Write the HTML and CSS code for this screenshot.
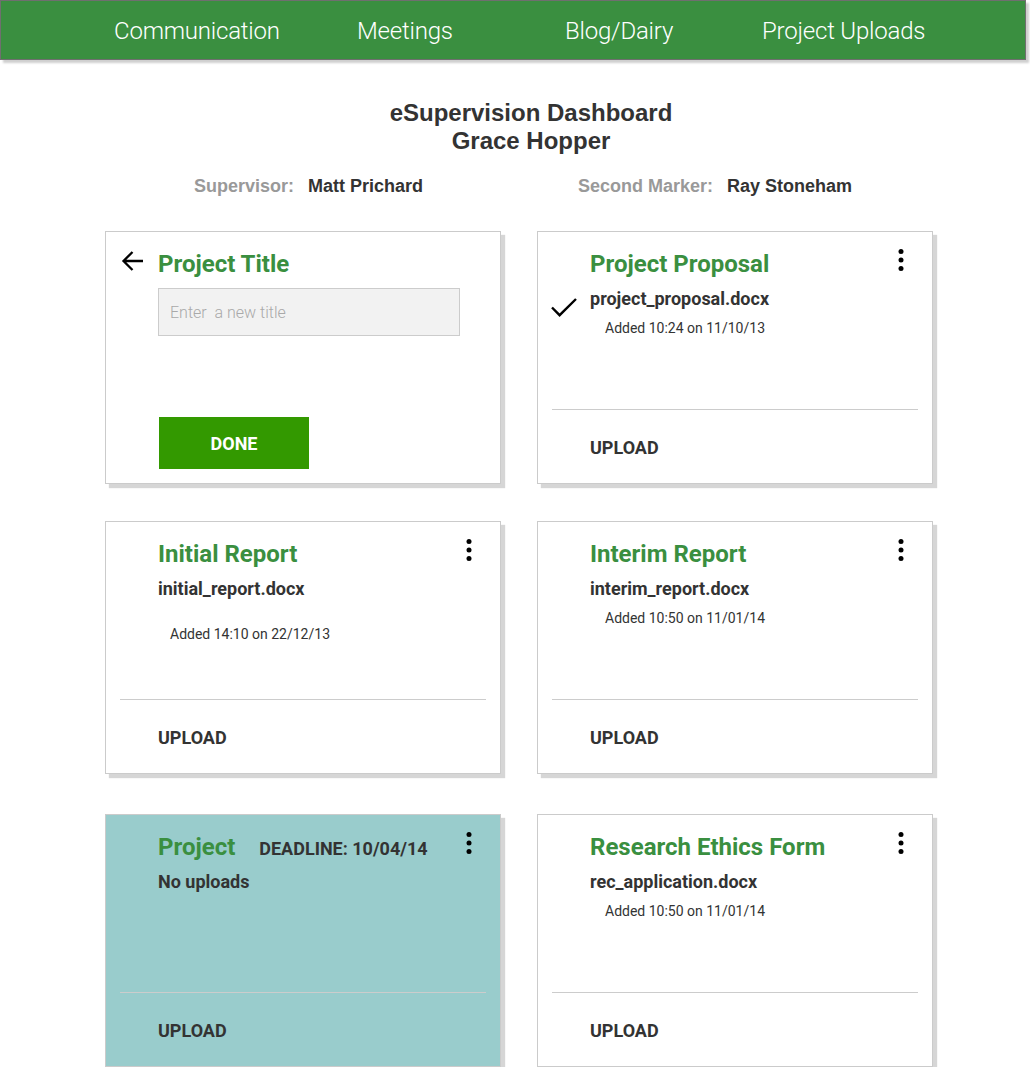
FILE: index.html
```html
<!DOCTYPE html>
<html lang="en">
<head>
<meta charset="utf-8">
<title>eSupervision Dashboard</title>
<link rel="stylesheet" href="styles.css">
</head>
<body>
<header class="topbar">
  <nav class="nav">
    <a class="nav-link">Communication</a>
    <a class="nav-link">Meetings</a>
    <a class="nav-link">Blog/Dairy</a>
    <a class="nav-link">Project Uploads</a>
  </nav>
</header>

<main class="page">
  <h1 class="page-title">eSupervision Dashboard<br>Grace Hopper</h1>

  <div class="people">
    <div class="person"><span class="person-label">Supervisor:</span><span class="person-name">Matt Prichard</span></div>
    <div class="person"><span class="person-label">Second Marker:</span><span class="person-name">Ray Stoneham</span></div>
  </div>

  <section class="cards">
    <!-- Project title editor -->
    <div class="card">
      <div class="card-body">
        <div class="card-head head-back">
          <svg class="back-icon" width="23" height="22" viewBox="0 0 23 22" aria-hidden="true">
            <path d="M22 11H2.5M11.5 2 2.5 11l9 9" fill="none" stroke="#000" stroke-width="2.3" stroke-linecap="butt" stroke-linejoin="miter"/>
          </svg>
          <h2 class="card-title">Project Title</h2>
        </div>
        <input class="title-input" type="text" placeholder="Enter  a new title">
        <button class="done-btn" type="button">DONE</button>
      </div>
    </div>

    <!-- Project Proposal -->
    <div class="card">
      <div class="card-body">
        <div class="card-head">
          <h2 class="card-title">Project Proposal</h2>
          <svg class="kebab" width="6" height="22" viewBox="0 0 6 22" aria-hidden="true"><circle cx="3" cy="2.6" r="2.5"/><circle cx="3" cy="11" r="2.5"/><circle cx="3" cy="19.4" r="2.5"/></svg>
        </div>
        <div class="file-row">
          <svg class="check-icon" width="26" height="19" viewBox="0 0 26 19" aria-hidden="true"><path d="M1 9.5 8.6 17.2 25 1" fill="none" stroke="#000" stroke-width="2.4"/></svg>
          <p class="file-name">project_proposal.docx</p>
        </div>
        <p class="added">Added 10:24 on 11/10/13</p>
      </div>
      <div class="card-foot">UPLOAD</div>
    </div>

    <!-- Initial Report -->
    <div class="card">
      <div class="card-body">
        <div class="card-head">
          <h2 class="card-title">Initial Report</h2>
          <svg class="kebab" width="6" height="22" viewBox="0 0 6 22" aria-hidden="true"><circle cx="3" cy="2.6" r="2.5"/><circle cx="3" cy="11" r="2.5"/><circle cx="3" cy="19.4" r="2.5"/></svg>
        </div>
        <p class="file-name">initial_report.docx</p>
        <p class="added added-low">Added 14:10 on 22/12/13</p>
      </div>
      <div class="card-foot">UPLOAD</div>
    </div>

    <!-- Interim Report -->
    <div class="card">
      <div class="card-body">
        <div class="card-head">
          <h2 class="card-title">Interim Report</h2>
          <svg class="kebab" width="6" height="22" viewBox="0 0 6 22" aria-hidden="true"><circle cx="3" cy="2.6" r="2.5"/><circle cx="3" cy="11" r="2.5"/><circle cx="3" cy="19.4" r="2.5"/></svg>
        </div>
        <p class="file-name">interim_report.docx</p>
        <p class="added">Added 10:50 on 11/01/14</p>
      </div>
      <div class="card-foot">UPLOAD</div>
    </div>

    <!-- Project (deadline) -->
    <div class="card card-due">
      <div class="card-body">
        <div class="card-head">
          <div class="title-group">
            <h2 class="card-title">Project</h2>
            <span class="deadline">DEADLINE: 10/04/14</span>
          </div>
          <svg class="kebab" width="6" height="22" viewBox="0 0 6 22" aria-hidden="true"><circle cx="3" cy="2.6" r="2.5"/><circle cx="3" cy="11" r="2.5"/><circle cx="3" cy="19.4" r="2.5"/></svg>
        </div>
        <p class="file-name">No uploads</p>
      </div>
      <div class="card-foot">UPLOAD</div>
    </div>

    <!-- Research Ethics Form -->
    <div class="card">
      <div class="card-body">
        <div class="card-head">
          <h2 class="card-title">Research Ethics Form</h2>
          <svg class="kebab" width="6" height="22" viewBox="0 0 6 22" aria-hidden="true"><circle cx="3" cy="2.6" r="2.5"/><circle cx="3" cy="11" r="2.5"/><circle cx="3" cy="19.4" r="2.5"/></svg>
        </div>
        <p class="file-name">rec_application.docx</p>
        <p class="added">Added 10:50 on 11/01/14</p>
      </div>
      <div class="card-foot">UPLOAD</div>
    </div>
  </section>
</main>
</body>
</html>
```

FILE: styles.css
```css
* { box-sizing: border-box; }

html, body {
  margin: 0;
  padding: 0;
  background: #fff;
}

body {
  font-family: Roboto, "Liberation Sans", Arial, sans-serif;
  color: #333;
}

/* ---------- top bar ---------- */
.topbar {
  width: 1026px;
  height: 60px;
  background: #3a8f40;
  border: 1px solid #6f6f6f;
  box-shadow: 3px 3px 2px #cfcfcf;
}

.nav {
  display: grid;
  grid-template-columns: 243px 208px 197px auto;
  padding-left: 113px;
  padding-top: 3px;
}

.nav-link {
  font-family: Roboto, sans-serif;
  font-weight: 300;
  font-size: 24px;
  line-height: 54px;
  letter-spacing: -0.2px;
  color: #fff;
  text-decoration: none;
  white-space: nowrap;
}

/* ---------- heading ---------- */
.page {
  padding-top: 39px;
}

.page-title {
  margin: 0;
  text-align: center;
  font-family: "Liberation Sans", Arial, sans-serif;
  font-weight: bold;
  font-size: 24px;
  line-height: 28px;
  color: #333;
  padding-left: 32px;
}

.people {
  display: grid;
  grid-template-columns: 384px auto;
  padding-left: 194px;
  margin-top: 20px;
  font-family: "Liberation Sans", Arial, sans-serif;
  font-weight: bold;
  font-size: 18px;
  line-height: 22px;
}

.person {
  display: flex;
  gap: 14px;
}

.person-label { color: #999; }
.person-name { color: #333; }

/* ---------- cards ---------- */
.cards {
  display: grid;
  grid-template-columns: 396px 396px;
  grid-template-rows: 253px 256px 253px;
  column-gap: 36px;
  row-gap: 37px;
  align-items: start;
  padding-left: 105px;
  margin-top: 34px;
}

.card {
  display: flex;
  flex-direction: column;
  height: 253px;
  background: #fff;
  border: 1px solid #cbcbcb;
  box-shadow: 4px 4px 1px #d6d6d6;
}

.card-due {
  background: #99cccc;
}

.card-body {
  flex: 1;
  padding: 18px 28px 0 52px;
}

.card-head {
  display: flex;
  justify-content: space-between;
  align-items: flex-start;
}

.head-back {
  justify-content: flex-start;
  gap: 14px;
  margin-left: -37px;
}

.back-icon {
  display: block;
  margin-top: 0;
}

.title-group {
  display: flex;
  align-items: baseline;
  gap: 24px;
}

.card-title {
  margin: 0;
  font-family: Roboto, sans-serif;
  font-weight: bold;
  font-size: 24px;
  line-height: 28px;
  color: #3a8f40;
}

.deadline {
  font-weight: bold;
  font-size: 18px;
  color: #333;
}

.kebab {
  display: block;
  margin-top: -1px;
  fill: #000;
}

.file-row {
  display: flex;
  align-items: flex-start;
  gap: 13px;
  margin-left: -39px;
}

.check-icon {
  display: block;
  flex: none;
  margin-top: 20px;
  margin-bottom: -20px;
}

.file-name {
  margin: 10px 0 0;
  font-weight: bold;
  font-size: 18px;
  line-height: 22px;
  color: #333;
}

.added {
  margin: 9px 0 0;
  padding-left: 15px;
  font-size: 14px;
  line-height: 18px;
  color: #333;
}

.added-low {
  margin-top: 25px;
  padding-left: 12px;
}

.card-foot {
  height: 74px;
  margin: 0 14px;
  border-top: 1px solid #cccccc;
  padding: 27px 0 0 38px;
  font-weight: bold;
  font-size: 18px;
  line-height: 22px;
  color: #333;
}

/* ---------- title editor ---------- */
.title-input {
  display: block;
  width: 302px;
  height: 48px;
  margin-top: 10px;
  padding: 0 11px;
  background: #f2f2f2;
  border: 1px solid #cccccc;
  font-family: Roboto, sans-serif;
  font-weight: 300;
  font-size: 16px;
  color: #333;
  outline: none;
}

.title-input::placeholder {
  color: #a9a9a9;
}

.done-btn {
  display: block;
  width: 150px;
  height: 52px;
  margin: 81px 0 0 1px;
  padding: 0;
  border: none;
  background: #339900;
  color: #fff;
  font-family: Roboto, sans-serif;
  font-weight: bold;
  font-size: 18px;
}
```
